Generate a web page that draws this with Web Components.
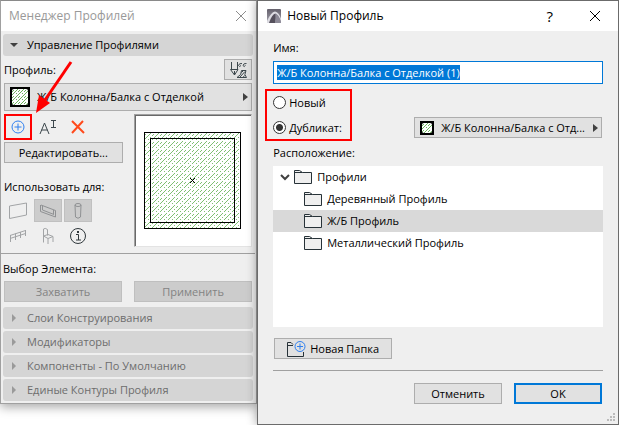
<!DOCTYPE html>
<html lang="ru">
<head>
	<meta charset="utf-8">
	<title>Менеджер Профилей</title>
	<meta name="viewport" content="width=device-width">
</head>
<style type="text/css">
	html, body {
		margin:0;
		background-color:white;
		font-family:'Open Sans', 'Noto Sans', sans-serif;
		font-size:11px;
		line-height:16px;
		color:#000;
	}
	body {
		display:flex;
		align-items:flex-start;
		min-height:100vh;
	}
	profile-palette {
		flex:256 1 0;
	}
	profile-dialog {
		flex:361 1 0;
		align-self:stretch;
	}
</style>
<body>

<profile-palette></profile-palette>
<profile-dialog></profile-dialog>

</body>
<script type="text/javascript">

// small black square with the green concrete hatch
customElements.define('hatch-swatch', class extends HTMLElement {
	constructor() {
		super();
		this.attachShadow({mode:'open'}).innerHTML=`
		<style>
		:host {
			display:block;
			flex:none;
			box-sizing:border-box;
			width:var(--swatch, 14px);
			height:var(--swatch, 14px);
			border:2px solid #000;
			background-color:#000;
		}
		svg {
			display:block;
			width:100%;
			height:100%;
			border-radius:2px;
			background-color:white;
		}
		</style>
		<svg aria-hidden="true" shape-rendering="crispEdges">
			<defs>
				<pattern id="hatch" width="6" height="6" patternUnits="userSpaceOnUse">
					<path fill="#6cb45c" d="M0 5h1v1h-1zM1 4h1v1h-1zM2 3h1v1h-1zM3 2h1v1h-1zM4 1h1v1h-1zM5 0h1v1h-1zM0 2h1v1h-1zM1 1h1v1h-1zM4 4h1v1h-1z"/>
				</pattern>
			</defs>
			<rect width="100%" height="100%" fill="url(#hatch)"/>
		</svg>
		`
	}
})

// bordered push button: default, primary and disabled looks
customElements.define('push-button', class extends HTMLElement {
	constructor() {
		super();
		this.attachShadow({mode:'open'}).innerHTML=`
		<style>
		:host {
			display:block;
		}
		button {
			display:flex;
			align-items:center;
			justify-content:center;
			gap:4px;
			box-sizing:border-box;
			width:100%;
			height:21px;
			margin:0;
			padding:0 4px;
			border:1px solid #adadad;
			background-color:#e1e1e1;
			font:inherit;
			color:inherit;
			white-space:nowrap;
		}
		:host([primary]) button {
			border:2px solid #0078d7;
		}
		button:disabled {
			border-color:#bfbfbf;
			background-color:#ccc;
			color:#838383;
		}
		</style>
		<button><slot></slot></button>
		`
		this.shadowRoot.querySelector('button').disabled = this.hasAttribute('disabled')
	}
})

// pop-up button showing the chosen profile
customElements.define('profile-picker', class extends HTMLElement {
	constructor() {
		super();
		this.attachShadow({mode:'open'}).innerHTML=`
		<style>
		:host {
			display:block;
			min-width:0;
		}
		button {
			display:flex;
			align-items:center;
			box-sizing:border-box;
			width:100%;
			height:var(--picker-height, 21px);
			margin:0;
			padding:0 3px 0 5px;
			gap:7px;
			border:1px solid #adadad;
			background-color:#e1e1e1;
			font:inherit;
			color:inherit;
		}
		span {
			flex:1;
			min-width:0;
			overflow:hidden;
			white-space:nowrap;
			text-align:left;
		}
		svg {
			flex:none;
			width:5px;
			height:8px;
		}
		</style>
		<button>
			<hatch-swatch></hatch-swatch>
			<span><slot></slot></span>
			<svg viewBox="0 0 5 8" aria-hidden="true"><path d="M0 0L5 4L0 8Z" fill="#404040"/></svg>
		</button>
		`
	}
})

// collapsible section header
customElements.define('fold-header', class extends HTMLElement {
	constructor() {
		super();
		this.attachShadow({mode:'open'}).innerHTML=`
		<style>
		:host {
			display:block;
		}
		button {
			display:flex;
			align-items:center;
			box-sizing:border-box;
			width:100%;
			height:22px;
			margin:0;
			padding:0 7px;
			gap:9px;
			border:none;
			border-radius:3px;
			background-color:#d5d5d5;
			font:inherit;
			color:#6d6d6d;
		}
		:host([open]) button {
			color:#000;
		}
		svg {
			width:8px;
			height:8px;
			fill:#9a9a9a;
		}
		:host([open]) svg {
			fill:#404040;
			transform:rotate(90deg);
		}
		</style>
		<button><svg viewBox="0 0 8 8" aria-hidden="true"><path d="M2 0L6 4L2 8Z"/></svg><slot></slot></button>
		`
		this.shadowRoot.querySelector('button').setAttribute('aria-expanded', this.hasAttribute('open'))
	}
})

// square icon button, icon comes in through the slot
customElements.define('tool-button', class extends HTMLElement {
	constructor() {
		super();
		this.attachShadow({mode:'open'}).innerHTML=`
		<style>
		:host {
			display:block;
		}
		button {
			display:flex;
			align-items:center;
			justify-content:center;
			box-sizing:border-box;
			width:28px;
			height:23px;
			margin:0;
			padding:0;
			border:none;
			background:transparent;
		}
		:host([pressed]) button {
			border:1px solid #c0c0c0;
			background-color:#ccc;
		}
		:host([framed]) button {
			height:21px;
			border:1px solid #adadad;
			background-color:#e1e1e1;
		}
		:host([marked]) button {
			height:26px;
			border:2px solid #f00;
		}
		</style>
		<button><slot></slot></button>
		`
		this.shadowRoot.querySelector('button').setAttribute('aria-label', this.getAttribute('label'))
	}
})

// cross-section preview with sunken frame
customElements.define('profile-preview', class extends HTMLElement {
	constructor() {
		super();
		this.attachShadow({mode:'open'}).innerHTML=`
		<style>
		:host {
			display:flex;
			align-items:center;
			justify-content:center;
			box-sizing:border-box;
			border:1px solid;
			border-color:#a0a0a0 #e3e3e3 #e3e3e3 #a0a0a0;
			box-shadow:inset 1px 1px #696969;
			background-color:white;
		}
		svg {
			width:97px;
			height:97px;
		}
		</style>
		<svg viewBox="0 0 97 97" shape-rendering="crispEdges" aria-hidden="true">
			<defs>
				<pattern id="hatch" width="8" height="8" patternUnits="userSpaceOnUse">
					<g fill="#7fbf72">
						<path d="M0 7h1v1h-1zM1 6h1v1h-1zM2 5h1v1h-1zM3 4h1v1h-1zM4 3h1v1h-1zM5 2h1v1h-1zM6 1h1v1h-1z"/>
						<path d="M0 3h1v1h-1zM1 2h1v1h-1zM4 7h1v1h-1zM6 5h1v1h-1z"/>
					</g>
				</pattern>
			</defs>
			<rect x="0.5" y="0.5" width="96" height="96" fill="url(#hatch)" stroke="#000"/>
			<rect x="6.5" y="6.5" width="84" height="84" fill="none" stroke="#000"/>
			<path d="M46 46h1v1h-1zM47 47h1v1h-1zM48 48h1v1h-1zM49 49h1v1h-1zM50 50h1v1h-1zM50 46h1v1h-1zM49 47h1v1h-1zM47 49h1v1h-1zM46 50h1v1h-1z"/>
		</svg>
		`
	}
})

customElements.define('profile-palette', class extends HTMLElement {
	constructor() {
		super();
		this.attachShadow({mode:'open'}).innerHTML=`
		<style>
		:host {
			display:block;
			position:relative;
			box-sizing:border-box;
			border:1px solid #a0a0a0;
			border-top-color:#8a8a8a;
			background-color:#efefef;
			box-shadow:0 3px 10px rgba(0,0,0,0.35);
		}
		header {
			display:flex;
			align-items:center;
			justify-content:space-between;
			height:30px;
			padding:0 9px 0 8px;
			background-color:white;
			font-size:12px;
			color:#999;
		}
		h1 {
			margin:0;
			font:inherit;
		}
		header button {
			display:flex;
			margin:0;
			padding:0;
			border:none;
			background:transparent;
		}
		.body {
			padding:3px 3px 2px 2px;
		}
		.row {
			display:flex;
			align-items:center;
			justify-content:space-between;
			height:27px;
		}
		.manage {
			padding:0 1px;
		}
		.manage profile-picker {
			--picker-height:28px;
			--swatch:20px;
		}
		.columns {
			display:grid;
			grid-template-columns:1fr 1fr;
			gap:11px;
			padding-top:3px;
		}
		.tools {
			display:flex;
			align-items:center;
			gap:2px;
			padding-bottom:2px;
		}
		.caption {
			padding:16px 0 4px;
			white-space:nowrap;
		}
		.uses {
			display:grid;
			grid-template-columns:repeat(3, 28px);
			gap:2px;
		}
		hr {
			margin:6px -2px 7px;
			border:none;
			border-top:1px solid #a0a0a0;
		}
		.pair {
			display:grid;
			grid-template-columns:1fr 1fr;
			gap:12px;
			padding:4px 1px;
		}
		.folds {
			display:grid;
			gap:2px;
			padding-top:1px;
		}
		.arrow {
			position:absolute;
			left:29px;
			top:56px;
			width:44px;
			height:56px;
			pointer-events:none;
		}
		</style>
		<header>
			<h1>Менеджер Профилей</h1>
			<button aria-label="Закрыть"><svg width="12" height="12" viewBox="0 0 12 12"><path d="M1 1L11 11M11 1L1 11" stroke="#8c8c8c"/></svg></button>
		</header>
		<div class="body">
			<fold-header open>Управление Профилями</fold-header>
			<div class="manage">
				<div class="row">
					<span>Профиль:</span>
					<tool-button framed label="Перо">
						<svg width="18" height="18" viewBox="0 0 18 18" fill="none" stroke="#3c474c">
							<path d="M2.500 1V8M8.500 1V8M1.500 8.500H9L5.500 14ZM5.500 10V14"/>
							<path d="M13 2.500Q10 2 9.500 4.500Q10.500 6.500 12 4.500M17.500 2.500Q14.500 2 14 4.500Q15 6.500 16.500 4.500"/>
							<path d="M8 16.500H17.500Q14.500 14 17 9.500H12.500Q13 14 8 16.500ZM11 16L16 10.500M14 16.500L15.500 14.500M12.500 11.500L14 10"/>
						</svg>
					</tool-button>
				</div>
				<profile-picker>Ж/Б Колонна/Балка с Отделкой</profile-picker>
				<div class="columns">
					<div>
						<div class="tools">
							<tool-button marked label="Новый">
								<svg width="14" height="14" viewBox="0 0 14 14" fill="none" stroke="#2f80f0"><circle cx="7" cy="7" r="6"/><path d="M7 3.500V10.500M3.500 7H10.500"/></svg>
							</tool-button>
							<tool-button label="Переименовать">
								<svg width="18" height="16" viewBox="0 0 18 16" fill="none" stroke="#3c474c"><path d="M1 15L5.500 4L10 15M2.500 11H8.500M12 1.500H17M14.500 1.500V8.500M12 8.500H17"/></svg>
							</tool-button>
							<tool-button label="Удалить">
								<svg width="14" height="14" viewBox="0 0 14 14" fill="none" stroke="#ff4a1c" stroke-width="2"><path d="M1 1L13 13M12 1L1 13"/></svg>
							</tool-button>
						</div>
						<push-button>Редактировать...</push-button>
						<div class="caption">Использовать для:</div>
						<div class="uses">
							<tool-button label="Стена">
								<svg width="20" height="18" viewBox="0 0 20 18" fill="none" stroke="#a2a4a6"><path d="M1.500 4L18.500 1V13L1.500 16.500Z"/></svg>
							</tool-button>
							<tool-button pressed label="Балка">
								<svg width="18" height="14" viewBox="0 0 18 14" fill="none" stroke="#8f9193"><path d="M1.500 1V7.500L16.500 13V6.500L2 1M3.500 2V6L15 10.500M14.500 6V10"/></svg>
							</tool-button>
							<tool-button pressed label="Колонна">
								<svg width="10" height="18" viewBox="0 0 10 18" fill="none" stroke="#8f9193"><ellipse cx="5" cy="3" rx="3" ry="1.500"/><path d="M2 3L2.500 15Q5 17.500 7.500 15L8 3"/></svg>
							</tool-button>
							<tool-button label="Ограждение">
								<svg width="18" height="14" viewBox="0 0 18 14" fill="none" stroke="#a2a4a6"><path d="M1 6.500L16.500 1.500M1 9.500L16.500 4.500M1.500 6V13M6.500 4.500V11M11.500 3V9M16.500 1V7"/></svg>
							</tool-button>
							<tool-button label="Объект">
								<svg width="14" height="18" viewBox="0 0 14 18" fill="none" stroke="#a2a4a6"><path d="M2.500 9V2Q4 0.500 6.500 2.500V8.500M2.500 9L7 7.500L12 9.500L7 11.500ZM2.500 9V15.500M7 11.500V17M12 9.500V15"/></svg>
							</tool-button>
							<tool-button label="Информация">
								<svg width="18" height="18" viewBox="0 0 18 18" fill="none" stroke="#30383c"><circle cx="9" cy="9" r="7.500"/><path d="M7 7.500H9.500V13M7 13H12"/><rect x="8" y="4" width="2" height="2" fill="#30383c" stroke="none"/></svg>
							</tool-button>
						</div>
					</div>
					<profile-preview></profile-preview>
				</div>
			</div>
			<hr>
			<div>Выбор Элемента:</div>
			<div class="pair">
				<push-button disabled>Захватить</push-button>
				<push-button disabled>Применить</push-button>
			</div>
			<div class="folds">
				<fold-header>Слои Конструирования</fold-header>
				<fold-header>Модификаторы</fold-header>
				<fold-header>Компоненты - По Умолчанию</fold-header>
				<fold-header>Единые Контуры Профиля</fold-header>
			</div>
		</div>
		<svg class="arrow" viewBox="0 0 44 56" aria-hidden="true">
			<path d="M41 5L15 43" stroke="#f00" stroke-width="3"/>
			<path d="M6 56L9 38L20 46Z" fill="#f00"/>
		</svg>
		`
	}
})

// one line of the folder tree
customElements.define('tree-row', class extends HTMLElement {
	constructor() {
		super();
		this.attachShadow({mode:'open'}).innerHTML=`
		<style>
		:host {
			display:flex;
			align-items:center;
			gap:5px;
			height:22px;
			padding-left:31px;
		}
		:host([root]) {
			padding-left:7px;
		}
		:host([selected]) {
			background-color:#d9d9d9;
		}
		.chevron {
			display:none;
			margin-right:-1px;
		}
		:host([root]) .chevron {
			display:block;
		}
		</style>
		<svg class="chevron" width="10" height="8" viewBox="0 0 10 8"><path d="M1 2L5 6L9 2" fill="none" stroke="#404040" stroke-width="2"/></svg>
		<svg width="18" height="16" viewBox="0 0 18 16"><path d="M0.500 14.500V1.500H5.500L8.500 3.500H17.500V14.500ZM1 3.500H8.500" fill="#efefef" stroke="#273238"/></svg>
		<slot></slot>
		`
		this.setAttribute('role', 'treeitem')
	}
})

// radio with its label
customElements.define('radio-option', class extends HTMLElement {
	constructor() {
		super();
		this.attachShadow({mode:'open'}).innerHTML=`
		<style>
		:host {
			display:block;
		}
		label {
			display:flex;
			align-items:center;
			gap:3px;
			height:21px;
		}
		input {
			appearance:none;
			box-sizing:border-box;
			width:13px;
			height:13px;
			margin:0;
			border:1px solid #333;
			border-radius:50%;
			background-color:white;
		}
		input:checked {
			background-image:radial-gradient(circle, #333 3px, transparent 4px);
		}
		</style>
		<label><input type="radio" name="source"><slot></slot></label>
		`
		this.shadowRoot.querySelector('input').checked = this.hasAttribute('checked')
	}
})

customElements.define('profile-dialog', class extends HTMLElement {
	constructor() {
		super();
		this.attachShadow({mode:'open'}).innerHTML=`
		<style>
		:host {
			display:flex;
			flex-direction:column;
			position:relative;
			box-sizing:border-box;
			border:1px solid #6b6b6b;
			background-color:#efefef;
			box-shadow:0 0 10px rgba(0,0,0,0.4);
		}
		header {
			display:flex;
			align-items:center;
			height:30px;
			padding:0 17px 0 9px;
			gap:6px;
			background-color:white;
			font-size:12px;
		}
		h1 {
			flex:1;
			margin:0;
			font:inherit;
		}
		header button {
			display:flex;
			margin:0;
			padding:0;
			border:none;
			background:transparent;
			font:inherit;
			font-size:15px;
			color:#000;
		}
		header button + button {
			margin-left:30px;
		}
		form {
			flex:1;
			display:flex;
			flex-direction:column;
			margin:0;
			padding:9px 15px;
		}
		.name {
			box-sizing:border-box;
			width:100%;
			height:23px;
			margin:5px 0 8px;
			padding:0 3px;
			border:1px solid #0078d7;
			outline:none;
			background-color:white;
			font:inherit;
		}
		.name::selection {
			background-color:#0078d7;
			color:white;
		}
		.source {
			display:grid;
			grid-template-columns:141px 1fr;
			row-gap:4px;
			position:relative;
			padding:0 1px 7px 0;
		}
		.source profile-picker {
			grid-column:2;
		}
		.mark {
			position:absolute;
			left:-8px;
			top:-3px;
			box-sizing:border-box;
			width:87px;
			height:52px;
			border:2px solid #f00;
			pointer-events:none;
		}
		.tree {
			flex:1;
			margin:5px 0 11px;
			background-color:white;
		}
		.folder {
			width:118px;
			margin-left:1px;
		}
		hr {
			box-sizing:border-box;
			width:100%;
			margin:11px 0 12px;
			border:none;
			border-top:1px solid #a0a0a0;
		}
		footer {
			display:flex;
			justify-content:flex-end;
			gap:12px;
			padding:0 1px 11px 0;
		}
		footer push-button {
			width:88px;
		}
		.grip {
			position:absolute;
			right:2px;
			bottom:2px;
		}
		</style>
		<header>
			<svg width="14" height="14" viewBox="0 0 14 14" aria-hidden="true">
				<defs><linearGradient id="shade" x2="0" y2="1"><stop stop-color="#65616c"/><stop offset="1" stop-color="#a3a1ad"/></linearGradient></defs>
				<rect width="14" height="14" rx="1" fill="url(#shade)"/>
				<path d="M0 14V12Q4 3 8 2.500Q12 3 14 10V12Q11 5 8.500 5Q6 6 4 14Z" fill="#dddce2"/>
				<path d="M2 14Q5 5 8.500 4.500Q9 8 8 14Z" fill="#55505c"/>
				<path d="M8 14Q9 8 8.500 4.500Q11 5 13.500 12L14 14Z" fill="#8d8a97"/>
			</svg>
			<h1>Новый Профиль</h1>
			<button aria-label="Справка">?</button>
			<button aria-label="Закрыть"><svg width="12" height="12" viewBox="0 0 12 12"><path d="M1 1L11 11M11 1L1 11" stroke="#000"/></svg></button>
		</header>
		<form onsubmit="return false">
			<label for="name">Имя:</label>
			<input class="name" id="name" type="text" value="Ж/Б Колонна/Балка с Отделкой (1)" spellcheck="false">
			<div class="source">
				<radio-option>Новый</radio-option><span></span>
				<radio-option checked>Дубликат:</radio-option>
				<profile-picker>Ж/Б Колонна/Балка с Отд...</profile-picker>
				<div class="mark"></div>
			</div>
			<div>Расположение:</div>
			<div class="tree" role="tree">
				<tree-row root>Профили</tree-row>
				<tree-row>Деревянный Профиль</tree-row>
				<tree-row selected>Ж/Б Профиль</tree-row>
				<tree-row>Металлический Профиль</tree-row>
			</div>
			<push-button class="folder">
				<svg width="19" height="16" viewBox="0 0 19 16" fill="none"><path d="M6 3.500L4 1.500H0.500V15.500H16.500V11M0.500 4.500H6" stroke="#273238"/><circle cx="13" cy="5.500" r="5" stroke="#2f80f0"/><path d="M13 2.500V8.500M10 5.500H16" stroke="#2f80f0"/></svg>
				Новая Папка
			</push-button>
			<hr>
			<footer>
				<push-button>Отменить</push-button>
				<push-button primary>OK</push-button>
			</footer>
		</form>
		<svg class="grip" width="9" height="9" viewBox="0 0 9 9" fill="#bbb" aria-hidden="true"><path d="M6 0h2v2h-2zM3 3h2v2h-2zM6 3h2v2h-2zM0 6h2v2h-2zM3 6h2v2h-2zM6 6h2v2h-2z"/></svg>
		`
	}
	connectedCallback() {
		const name = this.shadowRoot.querySelector('.name')
		name.focus()
		name.select()
	}
})

</script>
</html>
